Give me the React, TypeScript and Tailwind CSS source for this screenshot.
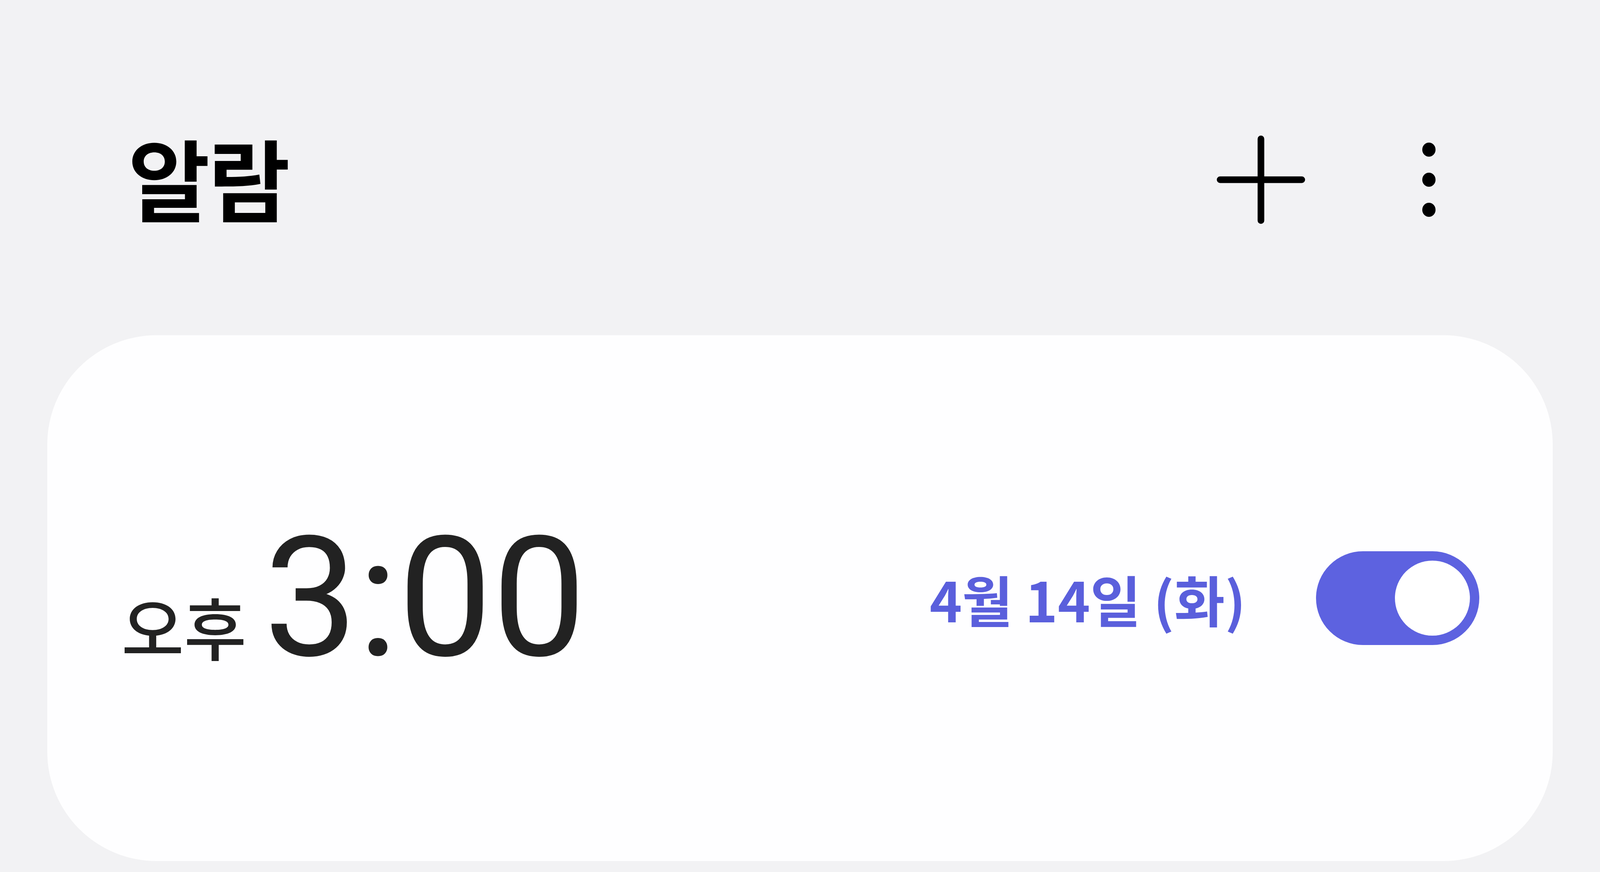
import React from 'react';

const kr = "font-['Noto_Sans_CJK_KR','Noto_Sans',sans-serif]";

function PlusIcon() {
  return (
    <svg viewBox="0 0 226 226" className="h-[226px] w-[226px]" fill="none">
      <path
        d="M113 8.5V217.5M8.5 113H217.5"
        stroke="#000"
        strokeWidth={17}
        strokeLinecap="round"
      />
    </svg>
  );
}

function MoreIcon() {
  return (
    <svg viewBox="0 0 36 190" className="h-[190px] w-[36px]" fill="#000">
      <ellipse cx="18" cy="18" rx="17" ry="18" />
      <ellipse cx="18" cy="95" rx="17" ry="18" />
      <ellipse cx="18" cy="172" rx="17" ry="18" />
    </svg>
  );
}

function Toggle({ on }: { on: boolean }) {
  return (
    <div
      className={`flex h-[240px] w-[418px] items-center rounded-full ${
        on ? 'justify-end bg-[#5d62e0]' : 'justify-start bg-[#c7c7cc]'
      } p-[24px]`}
    >
      <div className="h-[192px] w-[192px] rounded-full bg-white" />
    </div>
  );
}

export default function App() {
  return (
    <div className="flex h-[2232px] w-full flex-col overflow-hidden bg-[#f2f2f4] pt-[340px]">
      {/* 헤더 */}
      <header className="flex h-[240px] shrink-0 items-center pl-[328px] pr-[420px]">
        <h1
          className={`${kr} mb-[16px] text-[228px] font-bold leading-none tracking-[-0.02em] text-black`}
        >
          알람
        </h1>
        <div className="flex-1" />
        <button className="flex items-center">
          <PlusIcon />
        </button>
        <button className="ml-[299px] flex items-center">
          <MoreIcon />
        </button>
      </header>

      {/* 알람 카드 */}
      <div className="mx-[121px] mt-[278px] flex h-[1346px] shrink-0 items-center rounded-[280px] bg-[#fefeff] pl-[190px] pr-[188px]">
        <div className="flex items-baseline">
          <span className={`${kr} text-[174px] font-medium leading-none text-[#222]`}>
            오후
          </span>
          <span className="ml-[44px] font-['Roboto','Liberation_Sans',sans-serif] text-[428px] font-normal leading-none text-[#222]">
            3:00
          </span>
        </div>
        <div className="flex-1" />
        <span className={`${kr} text-[141px] font-semibold leading-none text-[#5a5fdc]`}>
          4월 14일 (화)
        </span>
        <div className="ml-[180px]">
          <Toggle on />
        </div>
      </div>
    </div>
  );
}
